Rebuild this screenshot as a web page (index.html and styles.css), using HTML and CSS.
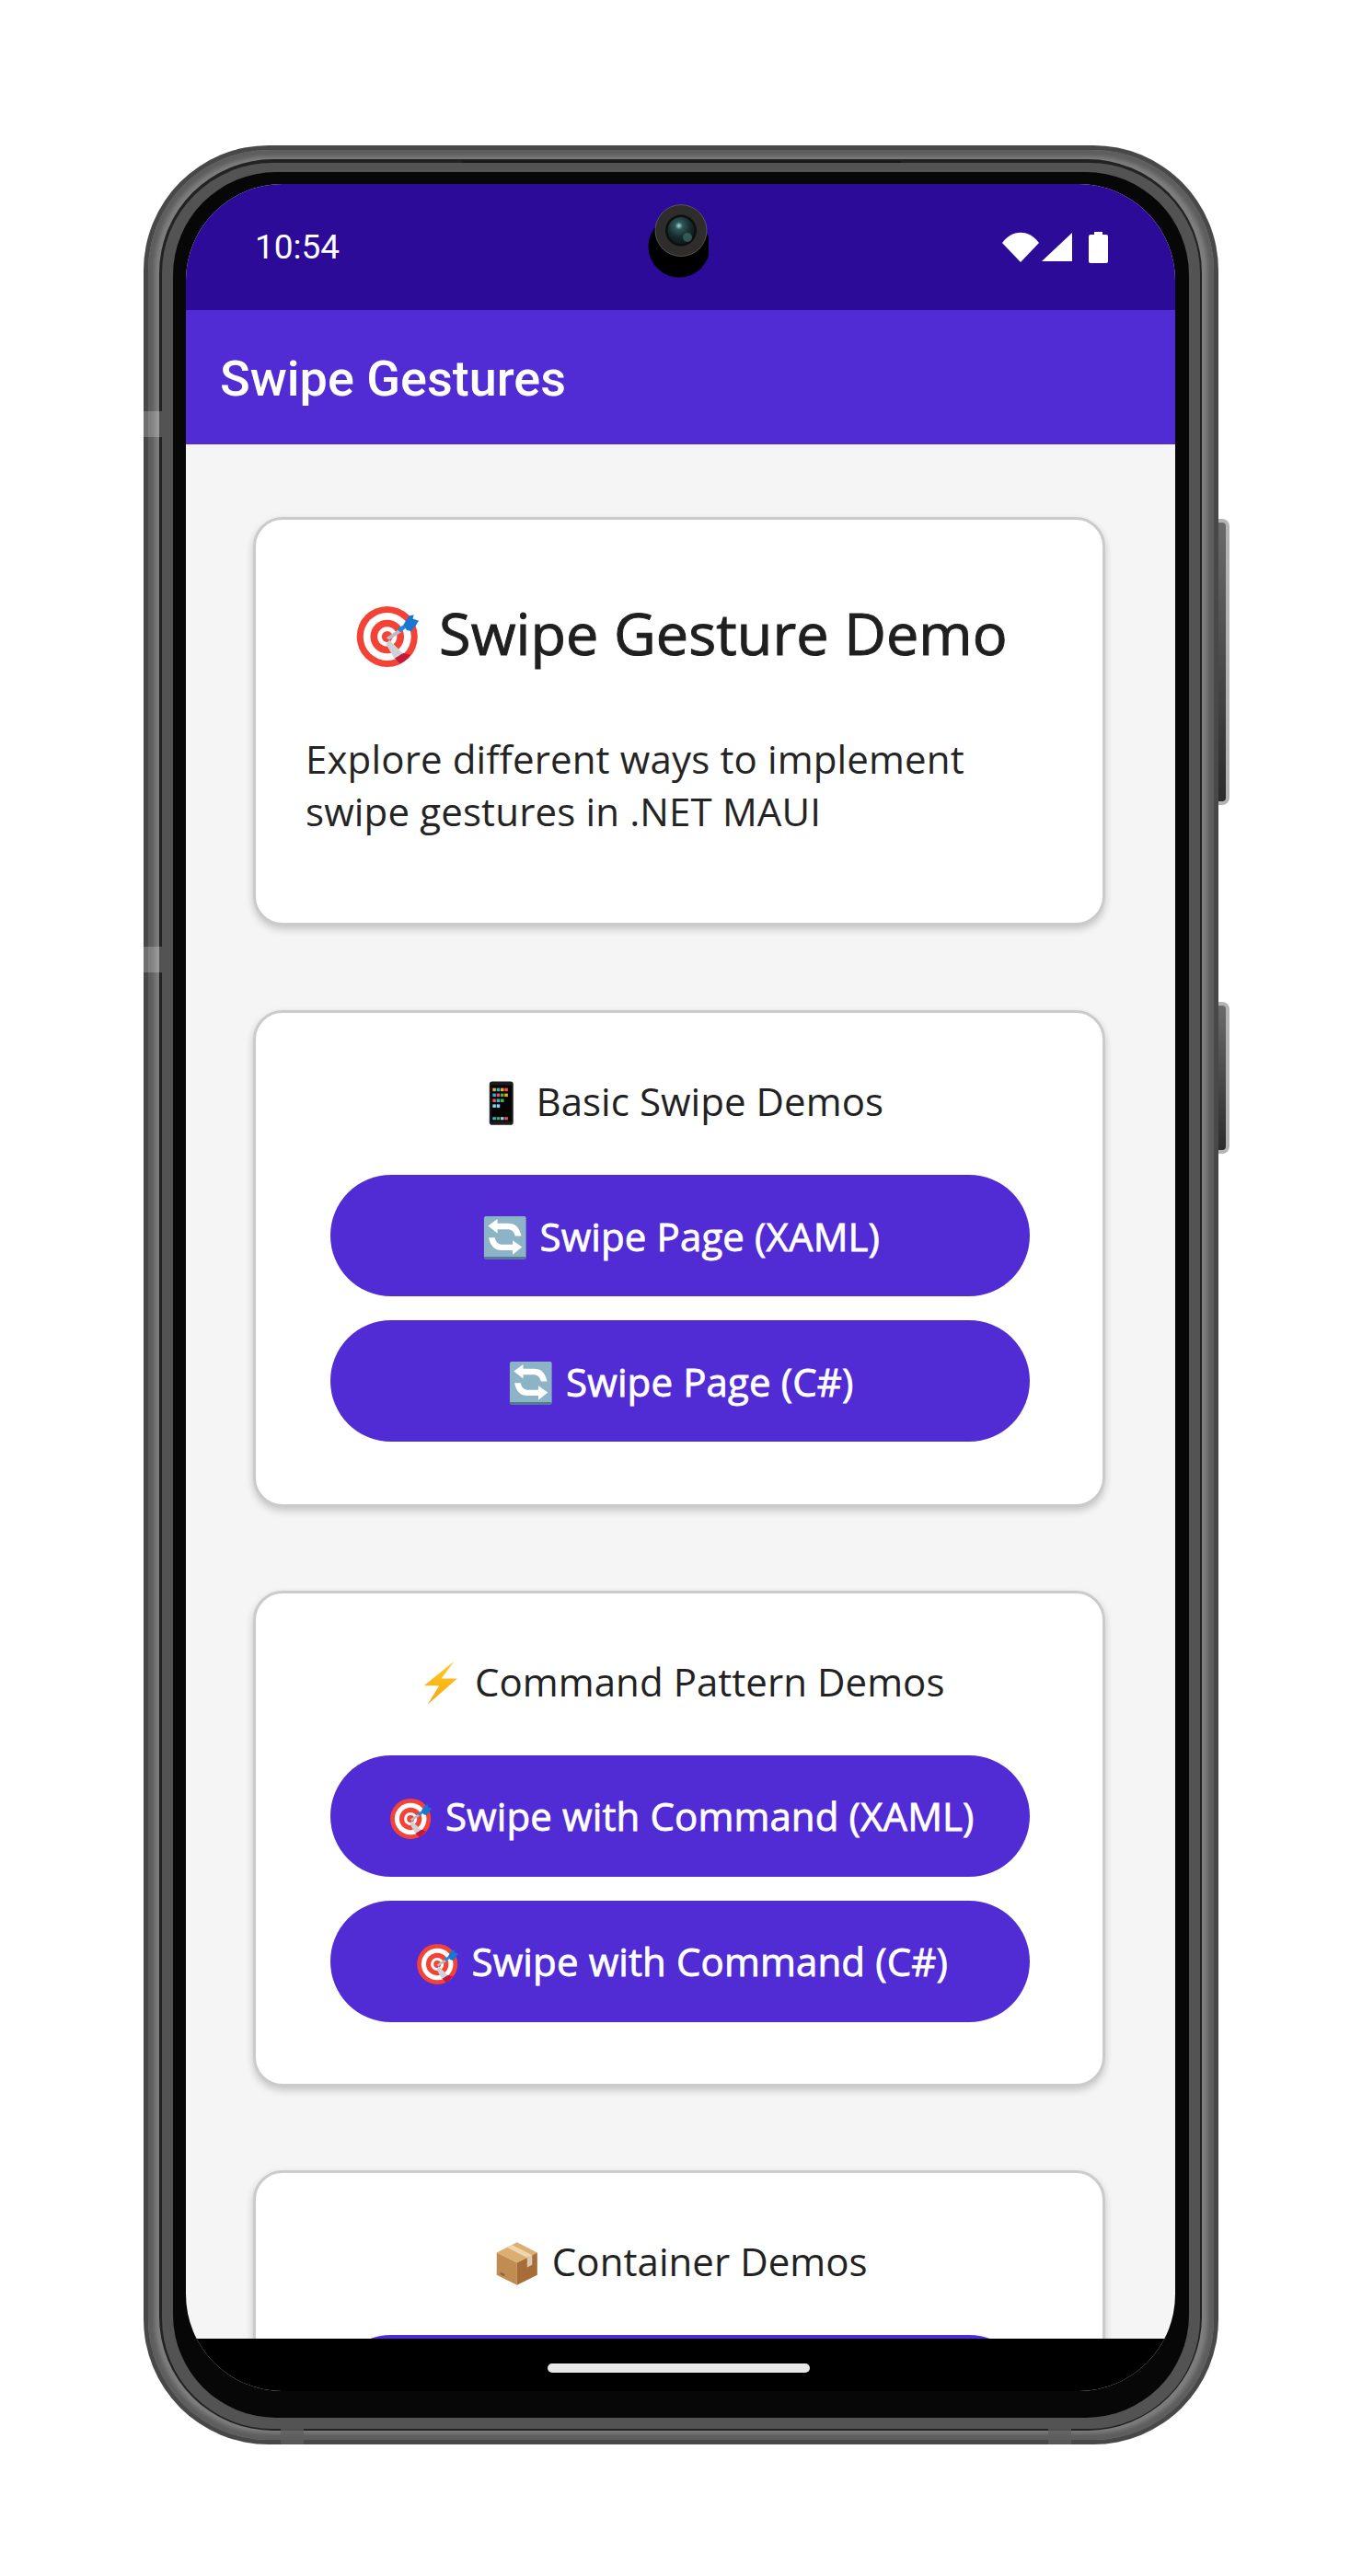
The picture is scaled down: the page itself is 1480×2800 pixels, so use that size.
FILE: index.html
```html
<!DOCTYPE html>
<html lang="en">
<head>
    <meta charset="UTF-8">
    <meta name="viewport" content="width=device-width, initial-scale=1.0">
    <title>Swipe Gestures</title>
    <link rel="stylesheet" href="styles.css">
</head>
<body>
    <!-- emoji drawings, reused through <use> -->
    <svg class="sprites" width="0" height="0" aria-hidden="true">
        <symbol id="emoji-target" viewBox="0 0 128 128">
            <circle cx="65" cy="66" r="56" fill="#f44336"/>
            <circle cx="65" cy="66" r="44" fill="#fff"/>
            <circle cx="65" cy="66" r="31" fill="#f44336"/>
            <circle cx="65" cy="66" r="18" fill="#fff"/>
            <circle cx="65" cy="66" r="10" fill="#f44336"/>
            <path d="M69 72 L95 98 L79 108 L63 80 Z" fill="#cfd3d6"/>
            <path d="M95 96 L108 100 A56 56 0 0 1 89 116 L79 106 Z" fill="#c2183a"/>
            <path d="M63 68 L87 52 L91 58 L69 72 Z" fill="#b9bec2"/>
            <path d="M83 52 L99 42 L103 48 L89 58 Z" fill="#1e88e5"/>
            <path d="M95 44 L105 28 L114 26 L112 33 L123 37 L117 46 L109 56 L101 54 Z" fill="#1976d2"/>
        </symbol>
        <symbol id="emoji-phone" viewBox="0 0 128 128">
            <rect x="31" y="4" width="66" height="120" rx="8" fill="#1c1c1e"/>
            <rect x="36" y="14" width="56" height="100" fill="#050505"/>
            <g fill="#f5a623">
                <rect x="40" y="22" width="9" height="9"/>
                <rect x="62" y="22" width="9" height="9"/>
                <rect x="73" y="37" width="9" height="9"/>
            </g>
            <g fill="#2bb5e8">
                <rect x="51" y="22" width="9" height="9"/>
                <rect x="40" y="37" width="9" height="9"/>
                <rect x="51" y="52" width="9" height="9"/>
                <rect x="40" y="102" width="9" height="8"/>
            </g>
            <g fill="#ef5350">
                <rect x="73" y="22" width="9" height="9"/>
                <rect x="51" y="37" width="9" height="9"/>
                <rect x="40" y="52" width="9" height="9"/>
                <rect x="73" y="102" width="9" height="8"/>
            </g>
            <g fill="#4caf50">
                <rect x="62" y="37" width="9" height="9"/>
                <rect x="62" y="52" width="9" height="9"/>
                <rect x="51" y="102" width="9" height="8"/>
            </g>
            <g fill="#8fd3f4">
                <rect x="40" y="67" width="9" height="9"/>
                <rect x="51" y="67" width="9" height="9"/>
                <rect x="62" y="102" width="9" height="8"/>
            </g>
        </symbol>
        <symbol id="emoji-repeat" viewBox="0 0 128 128">
            <rect x="6" y="5" width="116" height="118" rx="5" fill="#8db3c7"/>
            <path d="M6 117 H122 V118 A5 5 0 0 1 117 123 H11 A5 5 0 0 1 6 118 Z" fill="#4f7f8c"/>
            <path d="M17 32 L43 13 V25 H73 C92 25 104 36 109 60 L92 60 C89 46 82 41 71 41 H43 V52 Z" fill="#fff"/>
            <path d="M111 90 L85 111 V99 H55 C36 99 24 88 19 64 L36 64 C39 78 46 83 57 83 H85 V72 Z" fill="#fff"/>
        </symbol>
        <symbol id="emoji-bolt" viewBox="0 0 128 128">
            <defs>
                <linearGradient id="bolt-fill" x1="0" y1="0" x2="0" y2="1">
                    <stop offset="0" stop-color="#ffca28"/>
                    <stop offset="1" stop-color="#f7a70f"/>
                </linearGradient>
            </defs>
            <path d="M102 4 L18 72 L60 72 L28 124 L110 52 L66 52 Z" fill="url(#bolt-fill)"/>
        </symbol>
        <symbol id="emoji-box" viewBox="0 0 128 128">
            <path d="M64 6 L120 34 L64 62 L8 34 Z" fill="#dcae72"/>
            <path d="M8 34 L64 62 V124 L8 96 Z" fill="#c08c52"/>
            <path d="M120 34 L64 62 V124 L120 96 Z" fill="#a86c38"/>
            <path d="M36 20 L92 48 L106 41 L50 13 Z" fill="#eed6ae"/>
            <path d="M92 48 L106 41 V68 L92 75 Z" fill="#dccab0"/>
            <path d="M18 88 L30 94 V100 L18 94 Z" fill="#8a6238"/>
        </symbol>
    </svg>

    <div class="phone">
        <span class="antenna antenna-left-top"></span>
        <span class="antenna antenna-left-bottom"></span>
        <span class="antenna-dark antenna-bottom-left"></span>
        <span class="antenna-dark antenna-bottom-right"></span>
        <span class="speaker-line"></span>
        <span class="side-btn side-btn-power"></span>
        <span class="side-btn side-btn-volume"></span>
        <div class="phone-rim">
            <div class="phone-groove">
                <div class="phone-band">
                    <div class="phone-bezel">
                        <div class="screen">
                            <div class="status-bar">
                                <span class="status-time">10:54</span>
                                <svg class="camera" width="66" height="80" viewBox="0 0 66 80" aria-hidden="true">
                                    <defs>
                                        <radialGradient id="lens-fill" cx="0.42" cy="0.32" r="0.8">
                                            <stop offset="0" stop-color="#a4dde0"/>
                                            <stop offset="0.18" stop-color="#2f5658"/>
                                            <stop offset="0.55" stop-color="#16292b"/>
                                            <stop offset="1" stop-color="#0a1213"/>
                                        </radialGradient>
                                    </defs>
                                    <circle cx="34" cy="46" r="33.5" fill="#000"/>
                                    <circle cx="36" cy="28.6" r="28" fill="#2e2d2b" stroke="#77756f" stroke-width="0.6"/>
                                    <circle cx="36" cy="28.6" r="17" fill="#0c0f10"/>
                                    <circle cx="36" cy="28.6" r="14.5" fill="url(#lens-fill)"/>
                                    <circle cx="43" cy="36" r="5" fill="#3f6e69" opacity="0.7"/>
                                </svg>
                                <div class="status-icons">
                                    <svg width="40" height="33" viewBox="0 0 40 33" aria-hidden="true">
                                        <path d="M0 12 C11 -3 29 -3 40 12 L20 33 Z" fill="#fff"/>
                                    </svg>
                                    <svg class="icon-signal" width="33" height="31" viewBox="0 0 33 31" aria-hidden="true">
                                        <path d="M33 0 V31 H0 Z" fill="#fff"/>
                                    </svg>
                                    <svg class="icon-battery" width="21" height="34" viewBox="0 0 21 34" aria-hidden="true">
                                        <path d="M6 0 H15 V3 H19 A2 2 0 0 1 21 5 V32 A2 2 0 0 1 19 34 H2 A2 2 0 0 1 0 32 V5 A2 2 0 0 1 2 3 H6 Z" fill="#fff"/>
                                    </svg>
                                </div>
                            </div>
                            <header class="app-bar">Swipe Gestures</header>
                            <main class="content">
                                <section class="card card-intro">
                                    <h1 class="intro-title"><svg class="emoji"><use href="#emoji-target"/></svg> Swipe Gesture Demo</h1>
                                    <p class="intro-text">Explore different ways to implement swipe gestures in .NET MAUI</p>
                                </section>
                                <section class="card">
                                    <h2 class="section-title"><svg class="emoji"><use href="#emoji-phone"/></svg> Basic Swipe Demos</h2>
                                    <button class="demo-btn"><svg class="emoji"><use href="#emoji-repeat"/></svg> Swipe Page (XAML)</button>
                                    <button class="demo-btn"><svg class="emoji"><use href="#emoji-repeat"/></svg> Swipe Page (C#)</button>
                                </section>
                                <section class="card">
                                    <h2 class="section-title"><svg class="emoji"><use href="#emoji-bolt"/></svg> Command Pattern Demos</h2>
                                    <button class="demo-btn"><svg class="emoji"><use href="#emoji-target"/></svg> Swipe with Command (XAML)</button>
                                    <button class="demo-btn"><svg class="emoji"><use href="#emoji-target"/></svg> Swipe with Command (C#)</button>
                                </section>
                                <section class="card">
                                    <h2 class="section-title"><svg class="emoji"><use href="#emoji-box"/></svg> Container Demos</h2>
                                    <button class="demo-btn"></button>
                                </section>
                            </main>
                            <div class="nav-bar"><span class="home-pill"></span></div>
                        </div>
                    </div>
                </div>
            </div>
        </div>
    </div>
</body>
</html>
```

FILE: styles.css
```css
* {
    box-sizing: border-box;
}

body {
    margin: 0;
    background-color: #fff;
    font-family: "Open Sans", sans-serif;
}

.sprites {
    position: absolute;
}

/* phone frame, outside to inside */
.phone {
    position: relative;
    width: fit-content;
    margin: 158px 0 0 156px;
    padding: 5px;
    background-color: #484848;
    border-radius: 136px;
}

.phone-rim {
    padding: 10px 13px 10px 12px;
    background-color: #7e7e7e;
    border-radius: 131px;
    box-shadow: inset 0 0 4px 7px #5e5e5e;
}

.phone-groove {
    padding: 4px 2px 2px 3px;
    background-color: #222;
    border-radius: 124px;
}

.phone-band {
    padding: 10px 12px 12px 12px;
    background-color: #535353;
    border-radius: 120px;
}

.phone-bezel {
    padding: 13px 15px 29px 14px;
    background-color: #070707;
    border-radius: 112px;
}

.antenna {
    position: absolute;
    background-color: rgba(255, 255, 255, 0.22);
}

.antenna-dark {
    position: absolute;
    background-color: rgba(95, 95, 95, 0.75);
}

.antenna-left-top,
.antenna-left-bottom {
    left: 0;
    width: 20px;
    height: 28px;
}

.antenna-left-top {
    top: 289px;
}

.antenna-left-bottom {
    top: 871px;
}

.antenna-bottom-left,
.antenna-bottom-right {
    bottom: 0;
    width: 25px;
    height: 17px;
}

.antenna-bottom-left {
    left: 149px;
}

.antenna-bottom-right {
    left: 983px;
}

.speaker-line {
    position: absolute;
    left: 347px;
    top: 17px;
    width: 476px;
    height: 2px;
    background-color: #161616;
}

.side-btn {
    position: absolute;
    left: 100%;
    width: 12px;
    background: linear-gradient(#6a6a6a, #2b2b2b);
    border: 4px solid #b4b4b4;
    border-left: none;
    border-radius: 0 8px 8px 0;
}

.side-btn-power {
    top: 406px;
    height: 311px;
}

.side-btn-volume {
    top: 931px;
    height: 165px;
}

/* android screen */
.screen {
    position: relative;
    display: flex;
    flex-direction: column;
    width: 1075px;
    height: 2399px;
    overflow: hidden;
    background-color: #f5f5f5;
    border-radius: 105px;
}

.status-bar {
    display: flex;
    flex: none;
    justify-content: space-between;
    align-items: center;
    height: 137px;
    padding: 0 73px 0 75px;
    background-color: #2b0b98;
}

.status-time {
    font-family: Roboto, sans-serif;
    font-size: 37px;
    line-height: 42px;
    color: #fff;
}

.camera {
    position: absolute;
    left: 502px;
    top: 22px;
}

.status-icons {
    display: flex;
    align-items: center;
}

.icon-signal {
    margin-left: 3px;
}

.icon-battery {
    margin-left: 18px;
}

.app-bar {
    flex: none;
    height: 146px;
    padding: 44px 0 0 37px;
    background-color: #512bd4;
    font-family: Roboto, sans-serif;
    font-size: 54px;
    font-weight: 500;
    line-height: 62px;
    color: #fff;
}

.content {
    flex: 1;
    min-height: 0;
    overflow: hidden;
    padding: 79px 76px 0 73px;
}

.card {
    padding: 67px 79px 67.5px 81px;
    margin-bottom: 91px;
    background-color: #fff;
    border: 3px solid #cbcbcb;
    border-radius: 32px;
    box-shadow: 0 4px 8px rgba(0, 0, 0, 0.2);
}

.card-intro {
    padding: 80px 55px 93px 54px;
    margin-bottom: 92px;
}

.intro-title {
    margin: 0 0 65px;
    font-size: 63px;
    font-weight: 400;
    line-height: 86px;
    letter-spacing: 0.05px;
    text-align: center;
    color: #1f1f1f;
    -webkit-text-stroke: 1px #1f1f1f;
}

.intro-text {
    margin: 0;
    font-size: 42px;
    line-height: 57px;
    letter-spacing: 0.15px;
    color: #242424;
}

.section-title {
    margin: 0 0 52px;
    font-size: 42px;
    font-weight: 400;
    line-height: 57px;
    letter-spacing: 0.05px;
    text-align: center;
    color: #222;
}

.demo-btn {
    display: block;
    width: 100%;
    height: 132px;
    padding: 0;
    margin-top: 26px;
    background-color: #512bd4;
    border: none;
    border-radius: 66px;
    font-family: inherit;
    font-size: 42px;
    font-weight: 400;
    line-height: 57px;
    letter-spacing: 0.12px;
    color: #fff;
    -webkit-text-stroke: 0.8px #fff;
}

.section-title + .demo-btn {
    margin-top: 0;
}

.emoji {
    display: inline-block;
    width: 1.275em;
    height: 1.2em;
    vertical-align: -0.26em;
}

.nav-bar {
    display: flex;
    flex: none;
    justify-content: center;
    height: 57px;
    padding-top: 27px;
    background-color: #000;
}

.home-pill {
    width: 285px;
    height: 10px;
    margin-right: 4px;
    background-color: #e8e8e8;
    border-radius: 5px;
}
```
